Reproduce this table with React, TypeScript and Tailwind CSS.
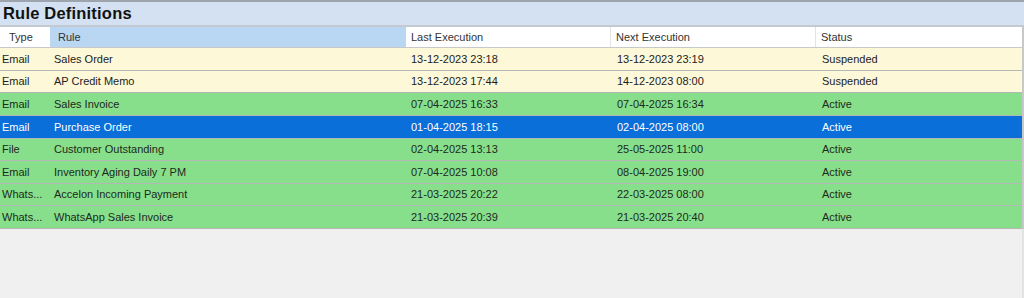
import React from 'react';

type Row = { type: string; rule: string; last: string; next: string; status: string; tone: 'yellow' | 'green' | 'selected' };

const rows: Row[] = [
  { type: 'Email', rule: 'Sales Order', last: '13-12-2023 23:18', next: '13-12-2023 23:19', status: 'Suspended', tone: 'yellow' },
  { type: 'Email', rule: 'AP Credit Memo', last: '13-12-2023 17:44', next: '14-12-2023 08:00', status: 'Suspended', tone: 'yellow' },
  { type: 'Email', rule: 'Sales Invoice', last: '07-04-2025 16:33', next: '07-04-2025 16:34', status: 'Active', tone: 'green' },
  { type: 'Email', rule: 'Purchase Order', last: '01-04-2025 18:15', next: '02-04-2025 08:00', status: 'Active', tone: 'selected' },
  { type: 'File', rule: 'Customer Outstanding', last: '02-04-2025 13:13', next: '25-05-2025 11:00', status: 'Active', tone: 'green' },
  { type: 'Email', rule: 'Inventory Aging Daily 7 PM', last: '07-04-2025 10:08', next: '08-04-2025 19:00', status: 'Active', tone: 'green' },
  { type: 'Whats...', rule: 'Accelon Incoming Payment', last: '21-03-2025 20:22', next: '22-03-2025 08:00', status: 'Active', tone: 'green' },
  { type: 'Whats...', rule: 'WhatsApp Sales Invoice', last: '21-03-2025 20:39', next: '21-03-2025 20:40', status: 'Active', tone: 'green' },
];

const toneClass = {
  yellow: 'bg-[#fdf8d8] text-[#1c1c1c]',
  green: 'bg-[#88df8b] text-[#1c2a1c]',
  selected: 'bg-[#0a6fd8] text-white',
};

// row heights alternate 23/22 to match the 22.6px pitch of the grid
const rowHeights = ['h-[23px]', 'h-[22px]', 'h-[23px]', 'h-[23px]', 'h-[22px]', 'h-[23px]', 'h-[22px]', 'h-[23px]'];

export default function App() {
  return (
    <div className="w-[1024px] h-[298px] bg-[#f0f0f0] flex flex-col overflow-hidden font-['Liberation_Sans',Arial,sans-serif]">
      {/* Title band */}
      <div className="h-[27px] shrink-0 border-t-2 border-b-2 border-t-[#9ea4ae] border-b-[#c4c8d0] bg-[#d3e1f2] flex items-center pl-[3px]">
        <h1 className="text-[16.5px] font-bold text-[#111] leading-none tracking-[0.2px]">Rule Definitions</h1>
      </div>

      <div className="flex flex-col border-r-2 border-r-[#c8c8c8]">
        {/* Header */}
        <div className="h-[21px] flex bg-white border-b border-[#c8c8c8] text-[11px] text-[#333]">
          <div className="w-[50px] pl-[9px] flex items-center">Type</div>
          <div className="w-[356px] pl-[8px] flex items-center bg-[#b9d7f3]">Rule</div>
          <div className="w-[205px] pl-[5px] flex items-center border-r border-[#e4e4e4]">Last Execution</div>
          <div className="w-[205px] pl-[5px] flex items-center border-r border-[#e4e4e4]">Next Execution</div>
          <div className="flex-1 pl-[5px] flex items-center">Status</div>
        </div>

        {rows.map((r, i) => (
          <div
            key={i}
            className={`${rowHeights[i]} flex items-center border-b border-[#b4b8b4] text-[11px] ${toneClass[r.tone]}`}
          >
            <div className="w-[50px] pl-[2px] truncate">{r.type}</div>
            <div className="w-[356px] pl-[4px]">{r.rule}</div>
            <div className="w-[205px] pl-[5px]">{r.last}</div>
            <div className="w-[205px] pl-[6px]">{r.next}</div>
            <div className="flex-1 pl-[6px]">{r.status}</div>
          </div>
        ))}
      </div>

      <div className="flex-1 border-r-2 border-r-[#e2e2e2]" />
    </div>
  );
}
